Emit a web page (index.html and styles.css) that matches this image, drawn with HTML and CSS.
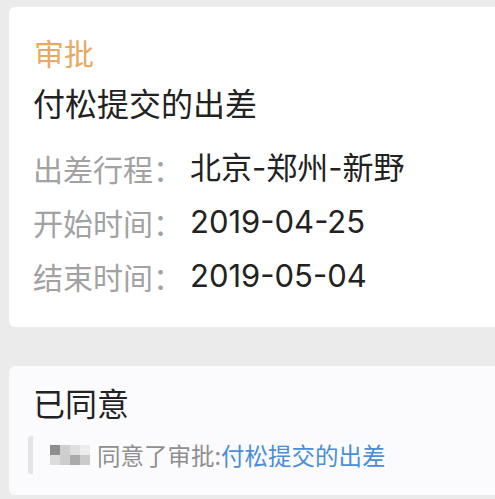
FILE: index.html
```html
<!DOCTYPE html>
<html lang="zh-CN">
<head>
    <meta charset="UTF-8">
    <meta name="viewport" content="width=device-width, initial-scale=1.0">
    <title>审批详情</title>
    <link rel="stylesheet" href="styles.css">
</head>
<body>
    <div class="page">
        <!-- Approval summary -->
        <div class="card summary">
            <div class="tag">审批</div>
            <div class="title">付松提交的出差</div>
            <div class="row">
                <span class="label">出差行程：</span>
                <span class="value">北京-郑州-新野</span>
            </div>
            <div class="row">
                <span class="label">开始时间：</span>
                <span class="value">2019-04-25</span>
            </div>
            <div class="row">
                <span class="label">结束时间：</span>
                <span class="value">2019-05-04</span>
            </div>
        </div>

        <!-- Result -->
        <div class="card result">
            <div class="status">已同意</div>
            <div class="quote">
                <span class="blur">
                    <i class="c1"></i><i class="c2"></i><i class="c3"></i><i class="c4"></i>
                    <i class="c5"></i><i class="c6"></i><i class="c7"></i><i class="c8"></i>
                </span>
                <span class="quote-text">同意了审批:<a class="link">付松提交的出差</a></span>
            </div>
        </div>
    </div>
</body>
</html>
```

FILE: styles.css
```css
body {
    margin: 0;
    background-color: #ebebeb;
    font-family: "Noto Sans CJK SC", "Noto Sans", sans-serif;
    color: #222;
}

.page {
    padding: 7px 0 0 9px;
}

.card {
    background: #fff;
    border-radius: 6px 0 0 6px;
    padding-left: 24px;
}

.summary {
    padding-top: 25px;
    padding-bottom: 24px;
}

.tag {
    font-size: 30px;
    line-height: 40px;
    color: #e9a962;
    padding-left: 1px;
}

.title {
    font-size: 32px;
    line-height: 40px;
    margin-top: 10px;
    margin-bottom: 19px;
}

.row {
    display: flex;
    font-size: 30px;
    line-height: 54px;
}

.label {
    color: #a2a2a2;
    width: 157px;
}

.value {
    color: #222;
    font-family: Inter, "Noto Sans CJK SC", sans-serif;
    font-size: 31px;
}

.result {
    margin-top: 39px;
    background: #fbfbfd;
    padding-top: 16px;
    padding-bottom: 21px;
}

.status {
    font-size: 32px;
    line-height: 40px;
}

.quote {
    display: flex;
    align-items: center;
    height: 38px;
    margin-top: 14px;
    margin-left: -5px;
    border-left: 5px solid #e4e4e4;
    border-radius: 3px;
    padding-left: 17px;
}

.blur {
    display: grid;
    grid-template-columns: repeat(4, 10px);
    grid-template-rows: repeat(2, 10px);
    margin-right: 7px;
}

.blur i {
    display: block;
}

.c1 { background: #8e8e8e; }
.c2 { background: #cfcfcf; }
.c3 { background: #dedede; }
.c4 { background: #ededed; }
.c5 { background: #dcdcdc; }
.c6 { background: #cdcdcd; }
.c7 { background: #ababab; }
.c8 { background: #cbcbcb; }

.quote-text {
    font-size: 23.5px;
    color: #8f8f8f;
}

.link {
    color: #4a8ed8;
}
```
